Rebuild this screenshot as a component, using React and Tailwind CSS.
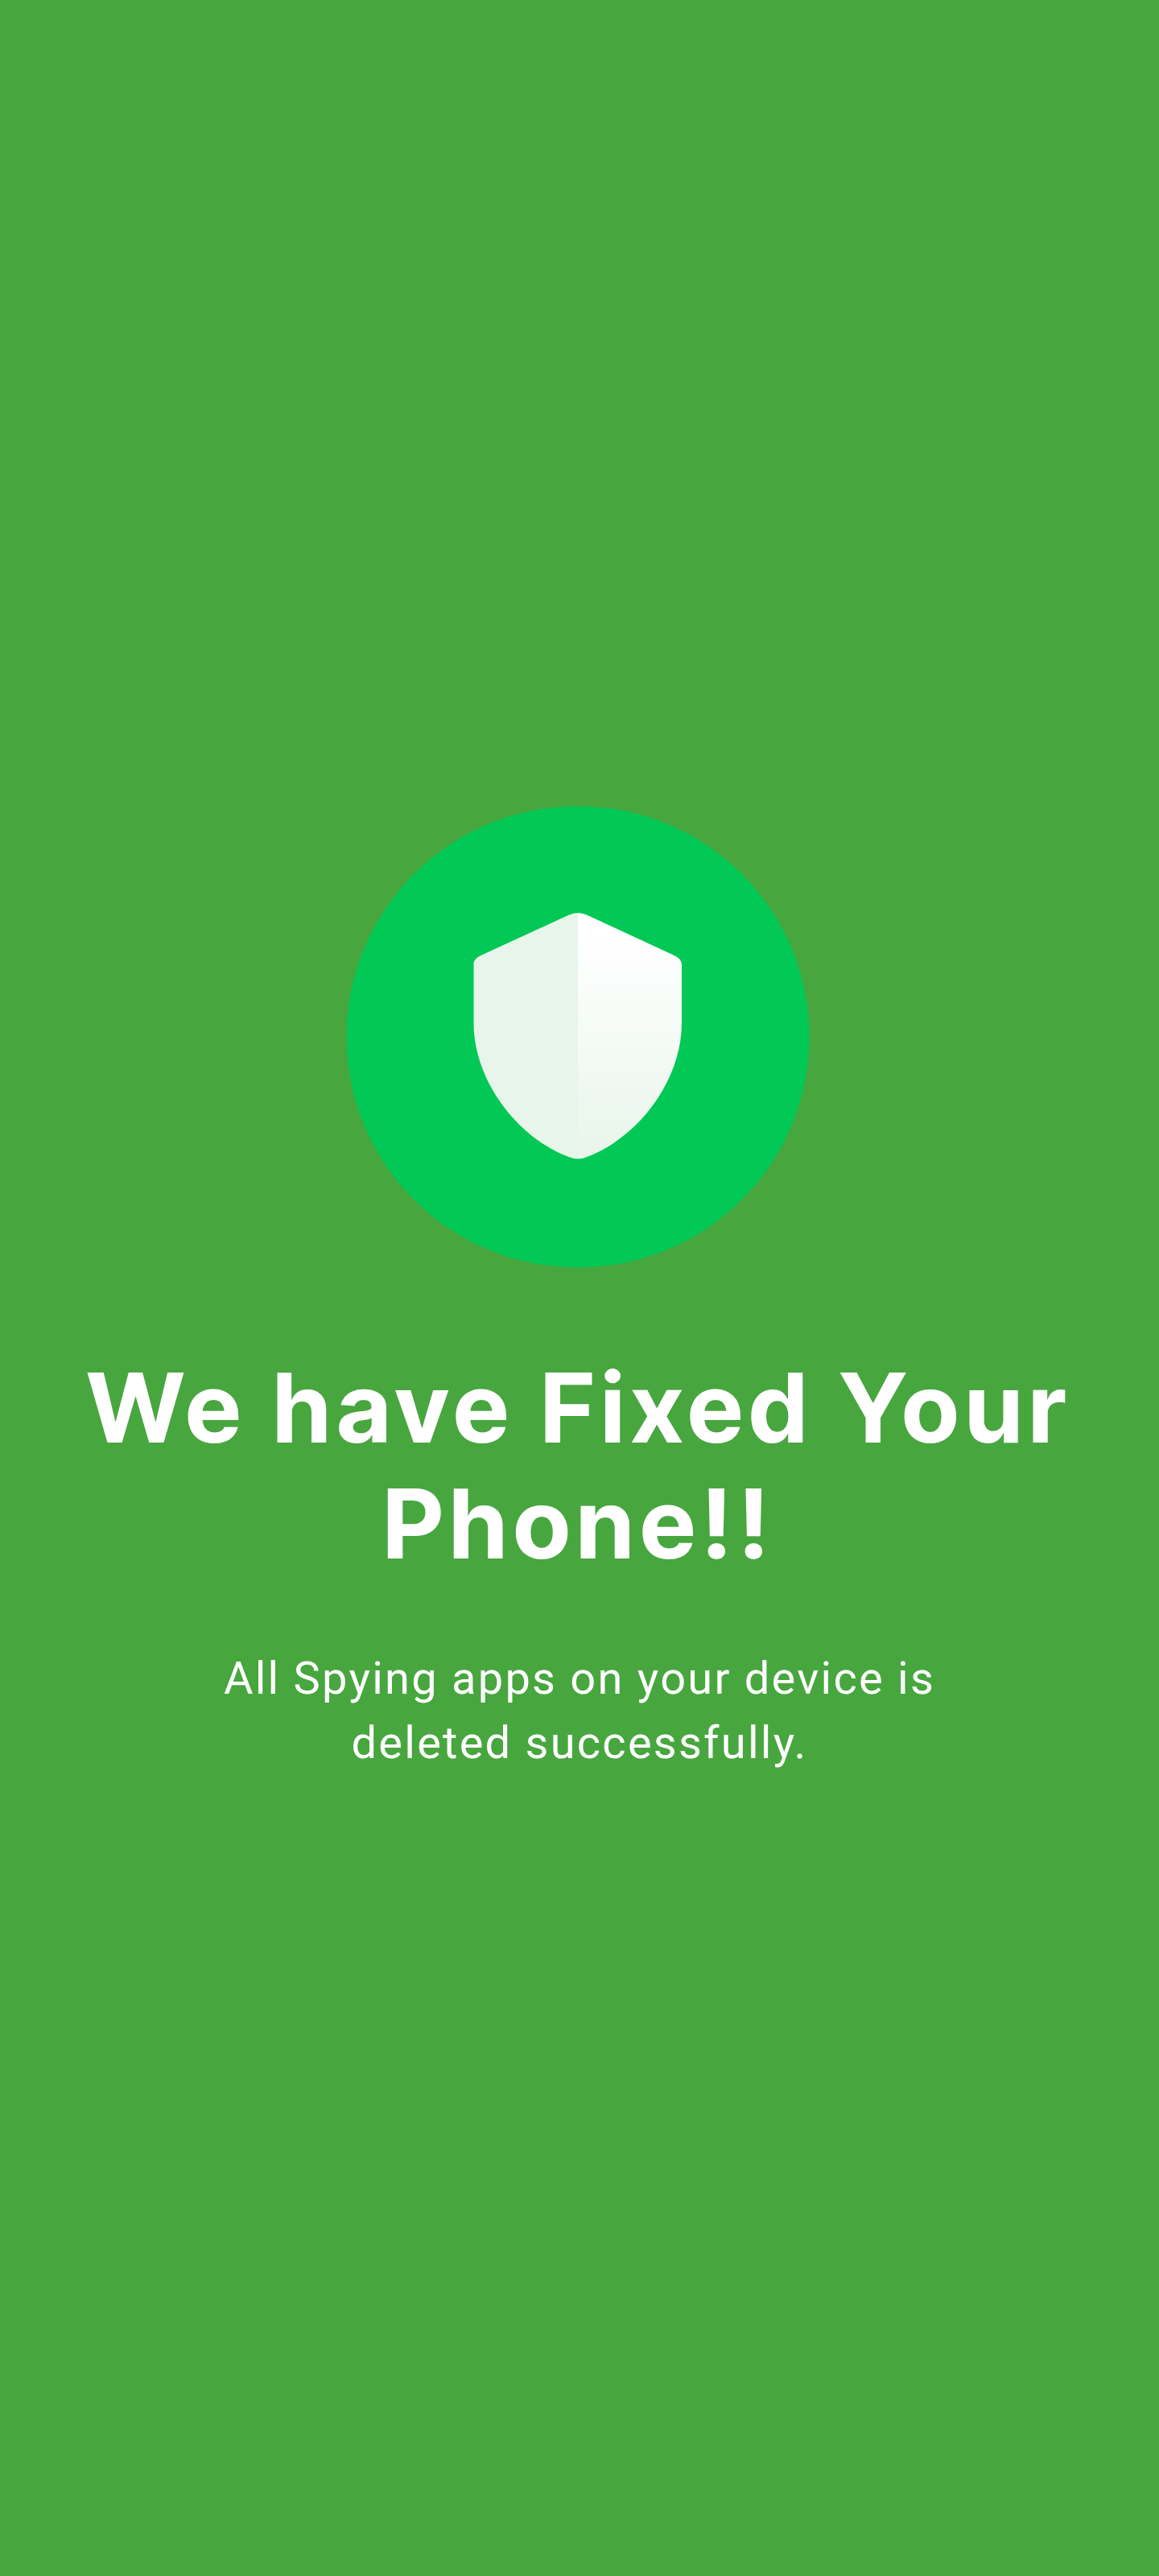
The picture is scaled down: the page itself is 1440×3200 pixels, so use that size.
function ShieldBadge() {
  return (
    <svg viewBox="0 0 586 586" className="mb-24 w-[586px] max-w-full" role="img" aria-label="Protected">
      <defs>
        <linearGradient id="shine" x1="0" y1="0" x2="0" y2="1">
          <stop offset="0.1" stopColor="#ffffff" />
          <stop offset="1" stopColor="#e8f5ea" />
        </linearGradient>
      </defs>
      <ellipse cx="291" cy="293" rx="287.500" ry="286.500" fill="#02c856" />
      <path
        d="M291 139Q285 139 280 141.500L169 192.500Q161 197 161.500 203V276C161.500 346 215 419 282 443Q286 444.500 291 444.500Z"
        fill="#e7f5ea"
      />
      <path
        d="M291 139Q297 139 302 141.500L412 192.500Q420 197 420 203V276C420 346 367 419 300 443Q296 444.500 291 444.500Z"
        fill="url(#shine)"
      />
    </svg>
  );
}

export default function App() {
  return (
    <main className="flex min-h-screen flex-col items-center justify-center bg-[#48a63f] px-12 text-center text-white">
      <ShieldBadge />
      <h1 className="mb-20 font-['Inter_Tight','Inter',sans-serif] text-[120px] leading-[144px] font-bold tracking-[0.07em]">
        We have Fixed Your Phone!!
      </h1>
      <p className="max-w-[1000px] font-['Roboto',sans-serif] text-[56px] leading-[80px] tracking-[0.04em]">
        All Spying apps on your device is deleted successfully.
      </p>
    </main>
  );
}
